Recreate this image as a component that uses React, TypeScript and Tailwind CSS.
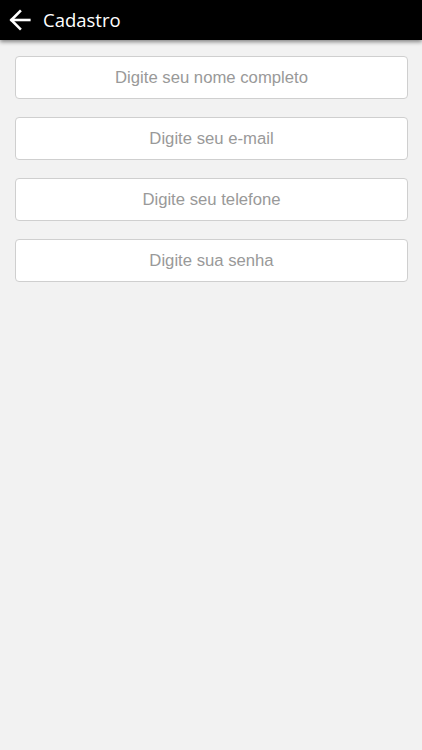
import React from "react";

export default function App() {
  const fields = [
    "Digite seu nome completo",
    "Digite seu e-mail",
    "Digite seu telefone",
    "Digite sua senha",
  ];
  return (
    <div className="w-[422px] h-[750px] bg-[#f2f2f2] flex flex-col overflow-hidden">
      <div className="h-[40px] bg-black flex items-center shrink-0 shadow-[0_2px_4px_rgba(0,0,0,0.45)] relative z-10">
        <svg width="28" height="28" viewBox="0 0 24 24" className="ml-[6px]" fill="none" stroke="white" strokeWidth="2.2" strokeLinecap="square">
          <path d="M20 12H5" />
          <path d="M12 4.5L4.5 12L12 19.5" />
        </svg>
        <span className="ml-[9px] text-white text-[18.5px] leading-none" style={{ fontFamily: '"Open Sans", sans-serif' }}>
          Cadastro
        </span>
      </div>
      <div className="flex flex-col gap-[18px] pl-[15px] pr-[14px] pt-[16px]">
        {fields.map((f) => (
          <input
            key={f}
            placeholder={f}
            className="h-[43px] w-full bg-white border border-[#cfcfcf] rounded-[4px] text-center text-[16.7px] placeholder:text-[#999999] outline-none"
            style={{ fontFamily: '"Liberation Sans", Arial, sans-serif' }}
          />
        ))}
      </div>
    </div>
  );
}
